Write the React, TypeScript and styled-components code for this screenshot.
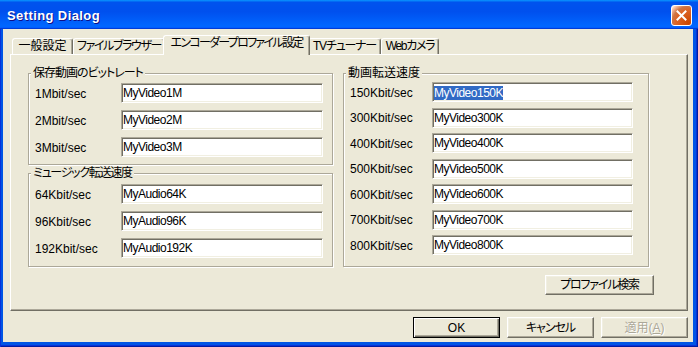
import * as React from 'react';
import styled, { createGlobalStyle, css } from 'styled-components';

const GlobalStyle = createGlobalStyle`
  html, body {
    margin: 0;
    padding: 0;
    background: #fff;
  }
  body {
    font-family: "Liberation Sans", "Noto Sans CJK JP", sans-serif;
    font-size: 12px;
    font-feature-settings: "palt";
    color: #000;
  }
`;

const Window = styled.div`
    width: 698px;
    height: 347px;
    display: flex;
    flex-direction: column;
    background: #0055e5;
    box-shadow: inset 1px 0 #0831d9, inset -1px 0 #001ea0, inset 0 -1px #001ea0, inset -2px 0 #0831d9, inset 0 -2px #0831d9;
`;

const TitleBar = styled.div`
    flex: none;
    height: 29px;
    box-sizing: border-box;
    padding: 2px 6px 0 7px;
    display: flex;
    align-items: center;
    justify-content: space-between;
    background: linear-gradient(180deg, #0997ff, #0053ee 8%, #0050ee 40%, #06f 88%, #06f 93%, #005bff 95%, #003dd7 96%, #003dd7);

    .caption {
        font-family: "Liberation Sans", sans-serif;
        font-weight: bold;
        font-size: 13px;
        letter-spacing: 0.4px;
        line-height: 15px;
        color: #fff;
        text-shadow: 1px 1px #0f1089;
    }
`;

const CloseButton = styled.div`
    width: 21px;
    height: 21px;
    box-sizing: border-box;
    border: 1px solid #fff;
    border-radius: 3px;
    background: radial-gradient(circle at 90% 90%, #cc4600 0, #dc6527 55%, #cd7546 70%, #ffccb2 90%, #fff 100%);
    display: flex;
    align-items: center;
    justify-content: center;
`;

const Body = styled.div`
    flex: 1;
    margin: 0 5px 5px 3px;
    padding: 6px 5px 4px 7px;
    background: #ece9d8;
    display: flex;
    flex-direction: column;
`;

const TabStrip = styled.div`
    height: 19px;
    padding-left: 2px;
    display: flex;
    align-items: flex-end;
`;

const Tab = styled.div<{ $w: number; $ls: number; $active?: boolean }>`
    box-sizing: border-box;
    width: ${p => p.$w}px;
    height: 16px;
    border: 1px solid #fff;
    border-right-color: #716f64;
    border-bottom: none;
    border-radius: 3px 3px 0 0;
    box-shadow: inset -1px 0 #aca899;
    background: #ece9d8;
    text-align: center;
    line-height: 14px;
    letter-spacing: ${p => p.$ls}px;
    white-space: nowrap;

    ${p => p.$active && css`
        width: ${p.$w + 4}px;
        height: 20px;
        margin: 0 -2px -1px;
        line-height: 15px;
        position: relative;
        z-index: 2;
    `}
`;

const Panel = styled.div`
    height: 257px;
    box-sizing: border-box;
    border: 1px solid #fff;
    border-right-color: #716f64;
    border-bottom-color: #716f64;
    box-shadow: inset -1px -1px #aca899;
    padding: 18px 0 0 17px;
`;

const Columns = styled.div`
    display: grid;
    grid-template-columns: 305px 306px;
    column-gap: 10px;
    align-items: start;
`;

const Stack = styled.div`
    display: flex;
    flex-direction: column;
    gap: 8px;
`;

const Group = styled.div`
    border: 1px solid #aca899;
    box-shadow: inset 1px 1px #fff, 1px 1px #fff;
`;

const Legend = styled.div<{ $ls?: number }>`
    width: fit-content;
    height: 14px;
    margin: -8px 0 0 2px;
    padding: 0 2px;
    line-height: 14px;
    letter-spacing: ${p => p.$ls ?? 0}px;
    background: #ece9d8;
    white-space: nowrap;
`;

type RowsProps = { $top: number; $bottom: number; $gap: number; $label: number; $field: number };

const Rows = styled.div<RowsProps>`
    display: grid;
    grid-template-columns: ${p => p.$label}px ${p => p.$field}px;
    grid-auto-rows: 20px;
    row-gap: ${p => p.$gap}px;
    align-items: center;
    padding: ${p => p.$top}px 0 ${p => p.$bottom}px 6px;
`;

const Label = styled.div`
    line-height: 14px;
    padding-top: 1px;
    white-space: nowrap;
`;

const TextBox = styled.div`
    box-sizing: border-box;
    height: 20px;
    padding-left: 1px;
    background: #fff;
    border: 1px solid;
    border-color: #aca899 #fff #fff #aca899;
    box-shadow: inset 1px 1px #716f64, inset -1px -1px #f1efe2;
    line-height: 18px;
    letter-spacing: -0.5px;
    white-space: nowrap;
    overflow: hidden;

    .selected {
        display: inline-block;
        line-height: 14px;
        background: #316ac5;
        color: #fff;
        vertical-align: middle;
    }
`;

const SearchRow = styled.div`
    margin-top: 8px;
    padding-right: 33px;
    display: flex;
    justify-content: flex-end;
`;

const Button = styled.button<{ $w?: number; $h?: number; $ls?: number; $default?: boolean }>`
    box-sizing: border-box;
    width: ${p => p.$w ?? 87}px;
    height: ${p => p.$h ?? 21}px;
    padding: 0;
    font: inherit;
    color: #000;
    letter-spacing: ${p => p.$ls ?? 0}px;
    background: #ece9d8;
    border: 1px solid;
    border-color: #fff #716f64 #716f64 #fff;
    box-shadow: inset -1px -1px #aca899, inset 1px 1px #f1efe2;
    line-height: 14px;

    ${p => p.$default && css`
        border-color: #000;
        box-shadow: inset 1px 1px #fff, inset -1px -1px #716f64, inset -2px -2px #aca899;
    `}

    &:disabled {
        color: #aca899;
        text-shadow: 1px 1px #fff;
    }
`;

const ButtonRow = styled.div`
    margin-top: 6px;
    display: flex;
    justify-content: flex-end;
    gap: 7px;
`;

const tabs = [
    { name: '一般設定', w: 61, ls: 0 },
    { name: 'ファイルブラウザー', w: 92, ls: -1.4 },
    { name: 'エンコーダープロファイル設定', w: 143, ls: -1.7, active: true },
    { name: 'TVチューナー', w: 73, ls: -1.2 },
    { name: 'Webカメラ', w: 58, ls: -1.3 },
];

const saveRates = [
    ['1Mbit/sec', 'MyVideo1M'],
    ['2Mbit/sec', 'MyVideo2M'],
    ['3Mbit/sec', 'MyVideo3M'],
];

const musicRates = [
    ['64Kbit/sec', 'MyAudio64K'],
    ['96Kbit/sec', 'MyAudio96K'],
    ['192Kbit/sec', 'MyAudio192K'],
];

const videoRates = ['150', '300', '400', '500', '600', '700', '800'].map(k => [`${k}Kbit/sec`, `MyVideo${k}K`]);

const App: React.FC = () => {
    return (
        <>
            <GlobalStyle />
            <Window>
                <TitleBar>
                    <span className='caption'>Setting Dialog</span>
                    <CloseButton>
                        <svg width="11" height="11" viewBox="0 0 11 11">
                            <path d="M1.5 1.5L9.5 9.5M9.5 1.5L1.5 9.5" stroke="#fff" strokeWidth="2" strokeLinecap="square" />
                        </svg>
                    </CloseButton>
                </TitleBar>

                <Body>
                    <TabStrip>
                        {tabs.map(t => (
                            <Tab key={t.name} $w={t.w} $ls={t.ls} $active={t.active}>{t.name}</Tab>
                        ))}
                    </TabStrip>

                    <Panel>
                        <Columns>
                            <Stack>
                                <Group>
                                    <Legend $ls={-1}>保存動画のビットレート</Legend>
                                    <Rows $top={3} $bottom={7} $gap={7} $label={86} $field={202}>
                                        {saveRates.map(([l, v]) => (
                                            <React.Fragment key={l}>
                                                <Label>{l}</Label>
                                                <TextBox>{v}</TextBox>
                                            </React.Fragment>
                                        ))}
                                    </Rows>
                                </Group>
                                <Group>
                                    <Legend $ls={-1.3}>ミュージック転送速度</Legend>
                                    <Rows $top={4} $bottom={8} $gap={7} $label={86} $field={202}>
                                        {musicRates.map(([l, v]) => (
                                            <React.Fragment key={l}>
                                                <Label>{l}</Label>
                                                <TextBox>{v}</TextBox>
                                            </React.Fragment>
                                        ))}
                                    </Rows>
                                </Group>
                            </Stack>

                            <Group>
                                <Legend>動画転送速度</Legend>
                                <Rows $top={2} $bottom={11} $gap={5.5} $label={82} $field={201}>
                                    {videoRates.map(([l, v], i) => (
                                        <React.Fragment key={l}>
                                            <Label>{l}</Label>
                                            <TextBox>
                                                {i === 0 ? <span className='selected'>{v}</span> : v}
                                            </TextBox>
                                        </React.Fragment>
                                    ))}
                                </Rows>
                            </Group>
                        </Columns>

                        <SearchRow>
                            <Button $w={109} $h={20} $ls={-1.2}>プロファイル検索</Button>
                        </SearchRow>
                    </Panel>

                    <ButtonRow>
                        <Button $default>OK</Button>
                        <Button $ls={-1}>キャンセル</Button>
                        <Button disabled>適用(<u>A</u>)</Button>
                    </ButtonRow>
                </Body>
            </Window>
        </>
    );
};

export default App;
